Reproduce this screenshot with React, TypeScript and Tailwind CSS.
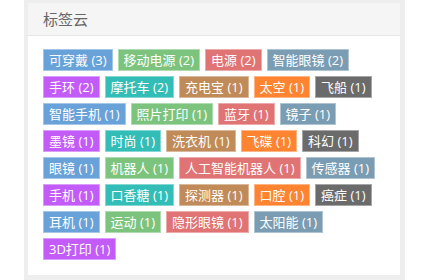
import React from 'react';

const palette = [
  'bg-[#68a2d9]',
  'bg-[#7cc47e]',
  'bg-[#e07373]',
  'bg-[#7a9db3]',
  'bg-[#c25bf7]',
  'bg-[#33bdb7]',
  'bg-[#c08a59]',
  'bg-[#ff8431]',
  'bg-[#6b6b6b]',
];

const tags: [string, number][] = [
  ['可穿戴', 3],
  ['移动电源', 2],
  ['电源', 2],
  ['智能眼镜', 2],
  ['手环', 2],
  ['摩托车', 2],
  ['充电宝', 1],
  ['太空', 1],
  ['飞船', 1],
  ['智能手机', 1],
  ['照片打印', 1],
  ['蓝牙', 1],
  ['镜子', 1],
  ['墨镜', 1],
  ['时尚', 1],
  ['洗衣机', 1],
  ['飞碟', 1],
  ['科幻', 1],
  ['眼镜', 1],
  ['机器人', 1],
  ['人工智能机器人', 1],
  ['传感器', 1],
  ['手机', 1],
  ['口香糖', 1],
  ['探测器', 1],
  ['口腔', 1],
  ['癌症', 1],
  ['耳机', 1],
  ['运动', 1],
  ['隐形眼镜', 1],
  ['太阳能', 1],
  ['3D打印', 1],
];

export default function App() {
  return (
    <div
      className="w-[430px] h-[280px] bg-white overflow-hidden"
      style={{ fontFamily: '"Open Sans", "Noto Sans CJK SC", sans-serif' }}
    >
      <div className="ml-[24px] w-[381px] h-[280px] bg-[#eeeeee] pt-[3px] pl-[4px] pr-[5px] pb-[5px]">
        <div className="bg-white h-full">
          {/* Header */}
          <div className="h-[33px] bg-[#f5f5f5] border-b border-[#e5e5e5] flex items-center px-[15px]">
            <h3 className="text-[15px] text-[#666] leading-none">标签云</h3>
          </div>

          {/* Tags */}
          <div className="px-[15px] pt-[13px] flex flex-wrap gap-[5px]">
            {tags.map(([name, count], i) => (
              <a
                key={name}
                className={`${palette[i % palette.length]} text-white text-[13px] leading-[20px] h-[22px] px-[5px] border border-white/40 whitespace-nowrap`}
              >
                {name} ({count})
              </a>
            ))}
          </div>
        </div>
      </div>
    </div>
  );
}
